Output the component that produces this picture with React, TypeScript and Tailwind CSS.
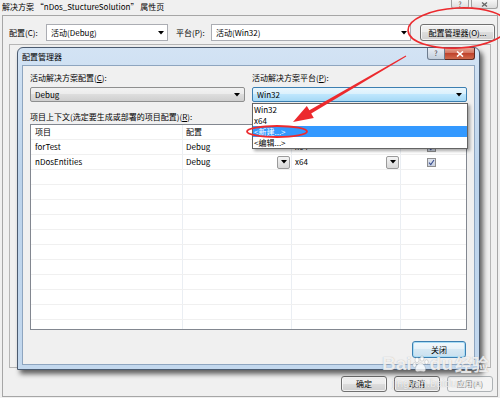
import clsx from 'clsx';

const FONT = { fontFamily: '"Noto Sans CJK SC", "Noto Sans", sans-serif' };

const BTN =
  'flex items-center justify-center rounded-[3px] border border-[#707070] bg-[linear-gradient(#f2f2f2_0%,#ebebeb_50%,#dddddd_50%,#cfcfcf_100%)] shadow-[inset_0_0_0_1px_rgba(255,255,255,0.7)]';

function Caret() {
  return (
    <svg width="6" height="4" viewBox="0 0 6 4" className="shrink-0">
      <path d="M0 0h6L3 3.5z" fill="#000" />
    </svg>
  );
}

function Combo({ value, active, className }: { value: string; active?: boolean; className?: string }) {
  return (
    <div
      className={clsx(
        'flex h-[15px] items-center justify-between rounded-[2px] border pl-[4px] pr-[4px]',
        active
          ? 'border-[#3c7fb1] bg-[linear-gradient(#eaf6fd_0%,#d9f0fc_50%,#bee6fd_50%,#a7d9f5_100%)]'
          : 'border-[#8e8f8f] bg-[linear-gradient(#f2f2f2_0%,#ebebeb_50%,#dddddd_50%,#cfcfcf_100%)]',
        className,
      )}
    >
      <span>{value}</span>
      <Caret />
    </div>
  );
}

function CellArrow() {
  return (
    <div className="flex h-[13px] w-[13px] items-center justify-center rounded-[2px] border border-[#9a9a9a] bg-[linear-gradient(#f4f4f4,#d8d8d8)]">
      <Caret />
    </div>
  );
}

function Check() {
  return (
    <div className="flex h-[9px] w-[9px] items-center justify-center border border-[#8f8f8f] bg-[linear-gradient(#dfe4ee,#c9d1e0)]">
      <svg width="7" height="7" viewBox="0 0 7 7">
        <path d="M1 3.6 2.8 5.6 6 1" fill="none" stroke="#3b4f8f" strokeWidth="1.1" />
      </svg>
    </div>
  );
}

type Row = { name: string; config: string; platform: string; arrows?: boolean };

const ROWS: Row[] = [
  { name: 'forTest', config: 'Debug', platform: 'x64' },
  { name: 'nDosEntities', config: 'Debug', platform: 'x64', arrows: true },
];

const EMPTY_ROWS = 10;

function GridRow({ row, header }: { row?: Row; header?: boolean }) {
  return (
    <div className="grid h-[15px] shrink-0 grid-cols-[152px_109px_109px_1fr] border-b border-[#f0f0f0]">
      <div className="flex items-center border-r border-[#eaeef3] pl-[4px]">{header ? '项目' : row?.name}</div>
      <div className="flex items-center justify-between border-r border-[#eaeef3] pl-[3px] pr-[1px]">
        <span>{header ? '配置' : row?.config}</span>
        {row?.arrows && <CellArrow />}
      </div>
      <div className="flex items-center justify-between border-r border-[#eaeef3] pl-[3px] pr-[1px]">
        <span>{header ? '平台' : row?.platform}</span>
        {row?.arrows && <CellArrow />}
      </div>
      <div className="flex items-center justify-center pr-[4px]">{header ? '生成' : row && <Check />}</div>
    </div>
  );
}

function ConfigManager() {
  return (
    <div className="absolute left-[17px] top-[47px] flex h-[323px] w-[463px] flex-col rounded-t-[6px] border border-[#4b5b70] bg-[linear-gradient(#d3e3f4,#bcd3eb_40%,#c3d8ee)] shadow-[3px_4px_5px_rgba(0,0,0,0.6)]">
      <div className="flex h-[17px] shrink-0 items-start justify-between pl-[4px] pr-[4px]">
        <span className="mt-[4px] leading-[10px] text-black">配置管理器</span>
        <div className="flex">
          <div className="flex h-[12px] w-[18px] items-center justify-center rounded-bl-[3px] border border-t-0 border-[#6d7c8e] bg-[linear-gradient(#e9eef5,#c3cfdc)] text-[7px] leading-none text-[#3a3a3a]">
            ?
          </div>
          <div className="flex h-[12px] w-[30px] items-center justify-center rounded-br-[3px] border border-l-0 border-t-0 border-[#5e2a22] bg-[linear-gradient(#e8a493,#d0705a_50%,#c0432c_50%,#cf6a4c)]">
            <svg width="8" height="6" viewBox="0 0 8 6">
              <path d="M1 0.5 7 5.5M7 0.5 1 5.5" stroke="#fff" strokeWidth="1.6" />
            </svg>
          </div>
        </div>
      </div>
      <div className="mx-[4px] mb-[4px] flex min-h-0 flex-1 flex-col border border-[#8ea5bf] bg-[#f0f0f0] pl-[7px] pr-[7px] pt-[7px]">
        <div className="flex gap-[7px]">
          <div className="flex w-[215px] flex-col gap-[4px]">
            <span className="leading-[10px]">
              活动解决方案配置(<span className="underline">C</span>):
            </span>
            <Combo value="Debug" />
          </div>
          <div className="flex flex-1 flex-col gap-[4px]">
            <span className="leading-[10px]">
              活动解决方案平台(<span className="underline">P</span>):
            </span>
            <Combo value="Win32" active />
          </div>
        </div>
        <span className="mt-[10px] leading-[10px]">
          项目上下文(选定要生成或部署的项目配置)(<span className="underline">R</span>):
        </span>
        <div className="mt-[2px] flex h-[206px] flex-col overflow-hidden border border-[#828790] bg-white">
          <GridRow header />
          {ROWS.map((r) => (
            <GridRow key={r.name} row={r} />
          ))}
          {Array.from({ length: EMPTY_ROWS }).map((_, i) => (
            <GridRow key={i} />
          ))}
          <GridRow />
        </div>
        <div className="mt-[11px] flex justify-end pr-[1px]">
          <div className="flex h-[17px] w-[54px] items-center justify-center rounded-[3px] border border-[#3c7fb1] bg-[linear-gradient(#f2f8fc_0%,#e6f1f8_50%,#d6e8f3_50%,#c9e0ef_100%)] shadow-[inset_0_0_0_1px_#a8dcf5]">
            关闭
          </div>
        </div>
      </div>

      {/* open platform list */}
      <div className="absolute left-[234px] top-[55px] flex w-[216px] flex-col border border-[#646464] bg-white py-0 shadow-[2px_2px_3px_rgba(0,0,0,0.35)]">
        <div className="flex h-[11px] items-center pl-[1px]">Win32</div>
        <div className="flex h-[11px] items-center pl-[1px]">x64</div>
        <div className="flex h-[11px] items-center bg-[#3399ff] pl-[1px] text-white">&lt;新建...&gt;</div>
        <div className="flex h-[11px] items-center pl-[1px]">&lt;编辑...&gt;</div>
      </div>
    </div>
  );
}

function Annotations() {
  return (
    <svg className="pointer-events-none absolute left-0 top-0" width="500" height="398" viewBox="0 0 500 398">
      <ellipse cx="458" cy="28" rx="50" ry="20" fill="none" stroke="#ec2a2e" strokeWidth="1.6" transform="rotate(-3 458 28)" />
      <ellipse cx="277" cy="131.5" rx="30" ry="5.5" fill="none" stroke="#ec2a2e" strokeWidth="1.8" />
      <polygon
        points="405.75,55.57 309.4,110.3 306.8,105.9 293,122 313.8,117.9 311.2,113.5 406.25,56.43"
        fill="#ec2a2e"
      />
    </svg>
  );
}

function Watermark() {
  return (
    <div className="pointer-events-none absolute left-[382px] top-[354px] flex flex-col items-start text-white/80 [text-shadow:0_0_1px_rgba(120,120,120,0.6)]">
      <div className="flex items-end text-[19px] font-bold leading-[20px]" style={{ fontFamily: '"Liberation Sans", sans-serif' }}>
        <span>Bai</span>
        <svg width="18" height="18" viewBox="0 0 18 18" className="mb-[1px] opacity-80">
          <g fill="#fff" stroke="rgba(120,120,120,0.5)" strokeWidth="0.6">
            <ellipse cx="5" cy="5" rx="2" ry="2.6" />
            <ellipse cx="10" cy="3.5" rx="2" ry="2.6" />
            <ellipse cx="14.5" cy="7" rx="1.8" ry="2.3" />
            <ellipse cx="2.5" cy="10" rx="1.8" ry="2.3" />
            <path d="M8.5 8c3 0 6 5 5 7.5-1 2-3 .8-5 .8s-4 1.2-5-.8C2.5 13 5.5 8 8.5 8z" />
          </g>
        </svg>
        <span>du</span>
        <span className="ml-[2px] text-[17px]" style={FONT}>经验</span>
      </div>
      <div className="ml-[10px] mt-[2px] text-[11px] leading-[14px]" style={{ fontFamily: '"Liberation Sans", sans-serif' }}>
        jingyan.baidu.com
      </div>
    </div>
  );
}

export default function App() {
  return (
    <div
      className="relative flex h-[398px] w-[500px] flex-col overflow-hidden bg-[#f0f0f0] text-[8px] leading-[10px] text-black"
      style={FONT}
    >
      <div className="flex h-[15px] shrink-0 items-start justify-between pl-[2px] pr-[2px]">
        <span className="mt-[2px]">解决方案 “nDos_StuctureSolution” 属性页</span>
        <div className="flex gap-[2px]">
          <div className="flex h-[9px] w-[18px] items-center justify-center rounded-b-[3px] border border-t-0 border-[#a0a0a0] bg-[linear-gradient(#f6f6f6,#dcdcdc)] text-[7px] leading-none text-[#555]">
            ?
          </div>
          <div className="flex h-[9px] w-[27px] items-center justify-center rounded-b-[3px] border border-t-0 border-[#a0a0a0] bg-[linear-gradient(#f6f6f6,#dcdcdc)]">
            <svg width="7" height="5" viewBox="0 0 7 5">
              <path d="M1 0.5 6 4.5M6 0.5 1 4.5" stroke="#666" strokeWidth="1.3" />
            </svg>
          </div>
        </div>
      </div>

      <div className="mb-[1px] ml-[2px] mr-[2px] flex min-h-0 flex-1 flex-col border border-[#a6a6a6] bg-[#f0f0f0]">
        <div className="mt-[8px] flex items-center pl-[6px]">
          <span className="w-[37px]">配置(C):</span>
          <div className="flex h-[17px] w-[122px] items-center justify-between border border-[#abadb3] bg-white pl-[4px] pr-[3px]">
            <span>活动(Debug)</span>
            <Caret />
          </div>
          <span className="ml-[8px] w-[35px]">平台(P):</span>
          <div className="flex h-[17px] w-[200px] items-center justify-between border border-[#abadb3] bg-white pl-[4px] pr-[3px]">
            <span>活动(Win32)</span>
            <Caret />
          </div>
          <div className={clsx(BTN, 'ml-[9px] h-[17px] w-[75px]')}>配置管理器(O)...</div>
        </div>

        <div className="ml-[6px] mr-[6px] mt-[3px] flex-1 border border-[#b5b5b5] bg-[#f0f0f0]" />

        <div className="flex justify-end gap-[7px] pb-[4px] pr-[4px] pt-[8px]">
          <div className={clsx(BTN, 'h-[16px] w-[46px]')}>确定</div>
          <div className={clsx(BTN, 'h-[16px] w-[46px]')}>取消</div>
          <div className="flex h-[16px] w-[46px] items-center justify-center rounded-[3px] border border-[#adb2b5] bg-[#f4f4f4] text-[#838383]">
            应用(A)
          </div>
        </div>
      </div>

      <ConfigManager />
      <Annotations />
      <Watermark />
    </div>
  );
}
